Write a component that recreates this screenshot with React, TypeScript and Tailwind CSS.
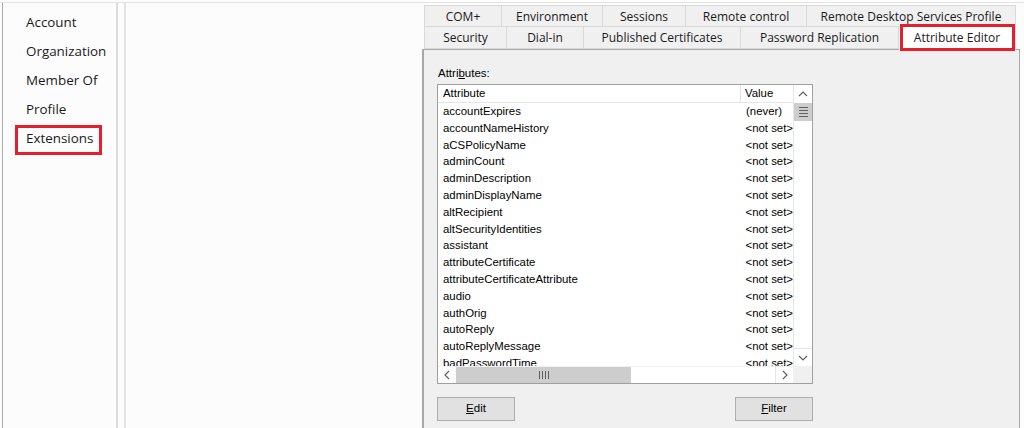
import React from "react";

const navItems = ["Account", "Organization", "Member Of", "Profile", "Extensions"];

const tabsTop = [
  { label: "COM+", w: "w-[78px]" },
  { label: "Environment", w: "w-[101px]" },
  { label: "Sessions", w: "w-[83px]" },
  { label: "Remote control", w: "w-[121px]" },
  { label: "Remote Desktop Services Profile", w: "w-[209px]" },
];

const tabsBottom = [
  { label: "Security", w: "w-[83px]" },
  { label: "Dial-in", w: "w-[77px]" },
  { label: "Published Certificates", w: "w-[157px]" },
  { label: "Password Replication", w: "w-[158px]" },
];

const rows: [string, string][] = [
  ["accountExpires", "(never)"],
  ["accountNameHistory", "<not set>"],
  ["aCSPolicyName", "<not set>"],
  ["adminCount", "<not set>"],
  ["adminDescription", "<not set>"],
  ["adminDisplayName", "<not set>"],
  ["altRecipient", "<not set>"],
  ["altSecurityIdentities", "<not set>"],
  ["assistant", "<not set>"],
  ["attributeCertificate", "<not set>"],
  ["attributeCertificateAttribute", "<not set>"],
  ["audio", "<not set>"],
  ["authOrig", "<not set>"],
  ["autoReply", "<not set>"],
  ["autoReplyMessage", "<not set>"],
  ["badPasswordTime", "<not set>"],
];

function Chevron({ dir }: { dir: "up" | "down" | "left" | "right" }) {
  const d = {
    up: "M1 6 L5 2 L9 6",
    down: "M1 2 L5 6 L9 2",
    left: "M6 1 L2 5 L6 9",
    right: "M2 1 L6 5 L2 9",
  }[dir];
  const vert = dir === "up" || dir === "down";
  return (
    <svg width={vert ? 10 : 8} height={vert ? 8 : 10} viewBox={vert ? "0 0 10 8" : "0 0 8 10"}>
      <path d={d} fill="none" stroke="#606060" strokeWidth="1.2" />
    </svg>
  );
}

export default function App() {
  return (
    <div className="w-[1024px] h-[428px] overflow-hidden bg-[#fcfcfc] pt-[2px] flex flex-col font-['Open_Sans','Noto_Sans',sans-serif] text-[#1a1a1a]">
      <div className="flex flex-1 border-t border-[#e3e3e3] min-h-0">
        {/* left nav */}
        <div className="ml-[2px] border-l border-[#a8a8a8] w-[114px] pt-[5px] flex flex-col text-[13.4px]">
          {navItems.map((item) => (
            <div key={item} className="relative h-[29px] leading-[29px] pl-[23px]">
              {item}
              {item === "Extensions" && (
                <div className="absolute left-[12px] top-[1px] w-[87px] h-[30px] border-[3px] border-[#e5202e]" />
              )}
            </div>
          ))}
        </div>
        <div className="w-[2px] bg-[#dcdcdc]" />
        <div className="w-[6px]" />
        <div className="w-[2px] bg-[#e3e3e3]" />

        {/* content */}
        <div className="flex-1 pl-[296px] pt-[2px] flex flex-col">
          <div className="w-[598px] flex flex-col">
            {/* tabs */}
            <div className="flex pl-[2px] text-[12px]">
              {tabsTop.map((t, i) => (
                <div
                  key={t.label}
                  className={`${t.w} h-[22px] leading-[21px] text-center bg-[#f0f0f0] border border-[#d9d9d9] ${i > 0 ? "border-l-0" : ""}`}
                >
                  {t.label}
                </div>
              ))}
            </div>
            <div className="flex pl-[2px] text-[12px] -mt-px">
              {tabsBottom.map((t, i) => (
                <div
                  key={t.label}
                  className={`${t.w} h-[23px] leading-[22px] text-center bg-[#f0f0f0] border border-[#d9d9d9] ${i > 0 ? "border-l-0" : ""}`}
                >
                  {t.label}
                </div>
              ))}
              <div className="relative w-[117px] h-[24px] leading-[22px] text-center bg-white border border-[#d9d9d9] border-l-0 border-b-0 z-10">
                Attribute Editor
                <div className="absolute left-[1px] top-[-3px] w-[115px] h-[27px] border-[3px] border-[#e5202e]" />
              </div>
            </div>

            {/* panel */}
            <div className="-mt-px h-[400px] bg-[#f0f0f0] border-l-2 border-t border-r border-[#a9a9a9] pl-[13px] pt-[15px] font-['Liberation_Sans',Arial,sans-serif] text-[12px] text-black">
              <div className="h-[17px] leading-[17px] pl-px text-[11.5px]">
                Attri<span className="underline">b</span>utes:
              </div>
              {/* list box */}
              <div className="mt-[2px] w-[376px] h-[300px] border border-[#a0a0a0] bg-white flex flex-col text-[11.4px]">
                <div className="flex flex-1 min-h-0">
                  <div className="w-[355px] flex flex-col overflow-hidden">
                    <div className="flex h-[18px] leading-[17px] border-b border-[#e5e5e5] shrink-0">
                      <div className="w-[303px] pl-[5px] border-r border-[#e5e5e5]">Attribute</div>
                      <div className="pl-[4px]">Value</div>
                    </div>
                    {rows.map(([a, v]) => (
                      <div key={a} className="flex h-[16.8px] leading-[16.8px] shrink-0">
                        <div className="w-[303px] pl-[5px] whitespace-nowrap">{a}</div>
                        <div className="pl-[5px] whitespace-nowrap">{v}</div>
                      </div>
                    ))}
                  </div>
                  {/* vertical scrollbar */}
                  <div className="w-[19px] border-l border-[#e6e6e6] flex flex-col">
                    <div className="h-[18px] flex items-center justify-center">
                      <Chevron dir="up" />
                    </div>
                    <div className="h-[18px] bg-[#cdcdcd] flex flex-col items-center justify-center gap-[2px]">
                      <div className="w-[9px] h-px bg-[#606060]" />
                      <div className="w-[9px] h-px bg-[#606060]" />
                      <div className="w-[9px] h-px bg-[#606060]" />
                      <div className="w-[9px] h-px bg-[#606060]" />
                    </div>
                    <div className="flex-1" />
                    <div className="h-[18px] border-t border-[#e6e6e6] flex items-center justify-center">
                      <Chevron dir="down" />
                    </div>
                  </div>
                </div>
                {/* horizontal scrollbar */}
                <div className="h-[17px] flex shrink-0 border-t border-[#f0f0f0]">
                  <div className="w-[18px] flex items-center justify-center">
                    <Chevron dir="left" />
                  </div>
                  <div className="w-[175px] bg-[#cdcdcd] flex items-center justify-center gap-[2px]">
                    <div className="w-px h-[8px] bg-[#606060]" />
                    <div className="w-px h-[8px] bg-[#606060]" />
                    <div className="w-px h-[8px] bg-[#606060]" />
                    <div className="w-px h-[8px] bg-[#606060]" />
                  </div>
                  <div className="flex-1" />
                  <div className="w-[18px] border-l border-[#e6e6e6] flex items-center justify-center">
                    <Chevron dir="right" />
                  </div>
                  <div className="w-[19px] bg-[#f0f0f0]" />
                </div>
              </div>
              {/* buttons */}
              <div className="mt-[13px] w-[376px] flex justify-between">
                <button className="w-[78px] h-[24px] bg-[#e1e1e1] border border-[#adadad] text-[11.5px]">
                  <span className="underline">E</span>dit
                </button>
                <button className="w-[78px] h-[24px] bg-[#e1e1e1] border border-[#adadad] text-[11.5px]">
                  <span className="underline">F</span>ilter
                </button>
              </div>
            </div>
          </div>
        </div>
      </div>
    </div>
  );
}
